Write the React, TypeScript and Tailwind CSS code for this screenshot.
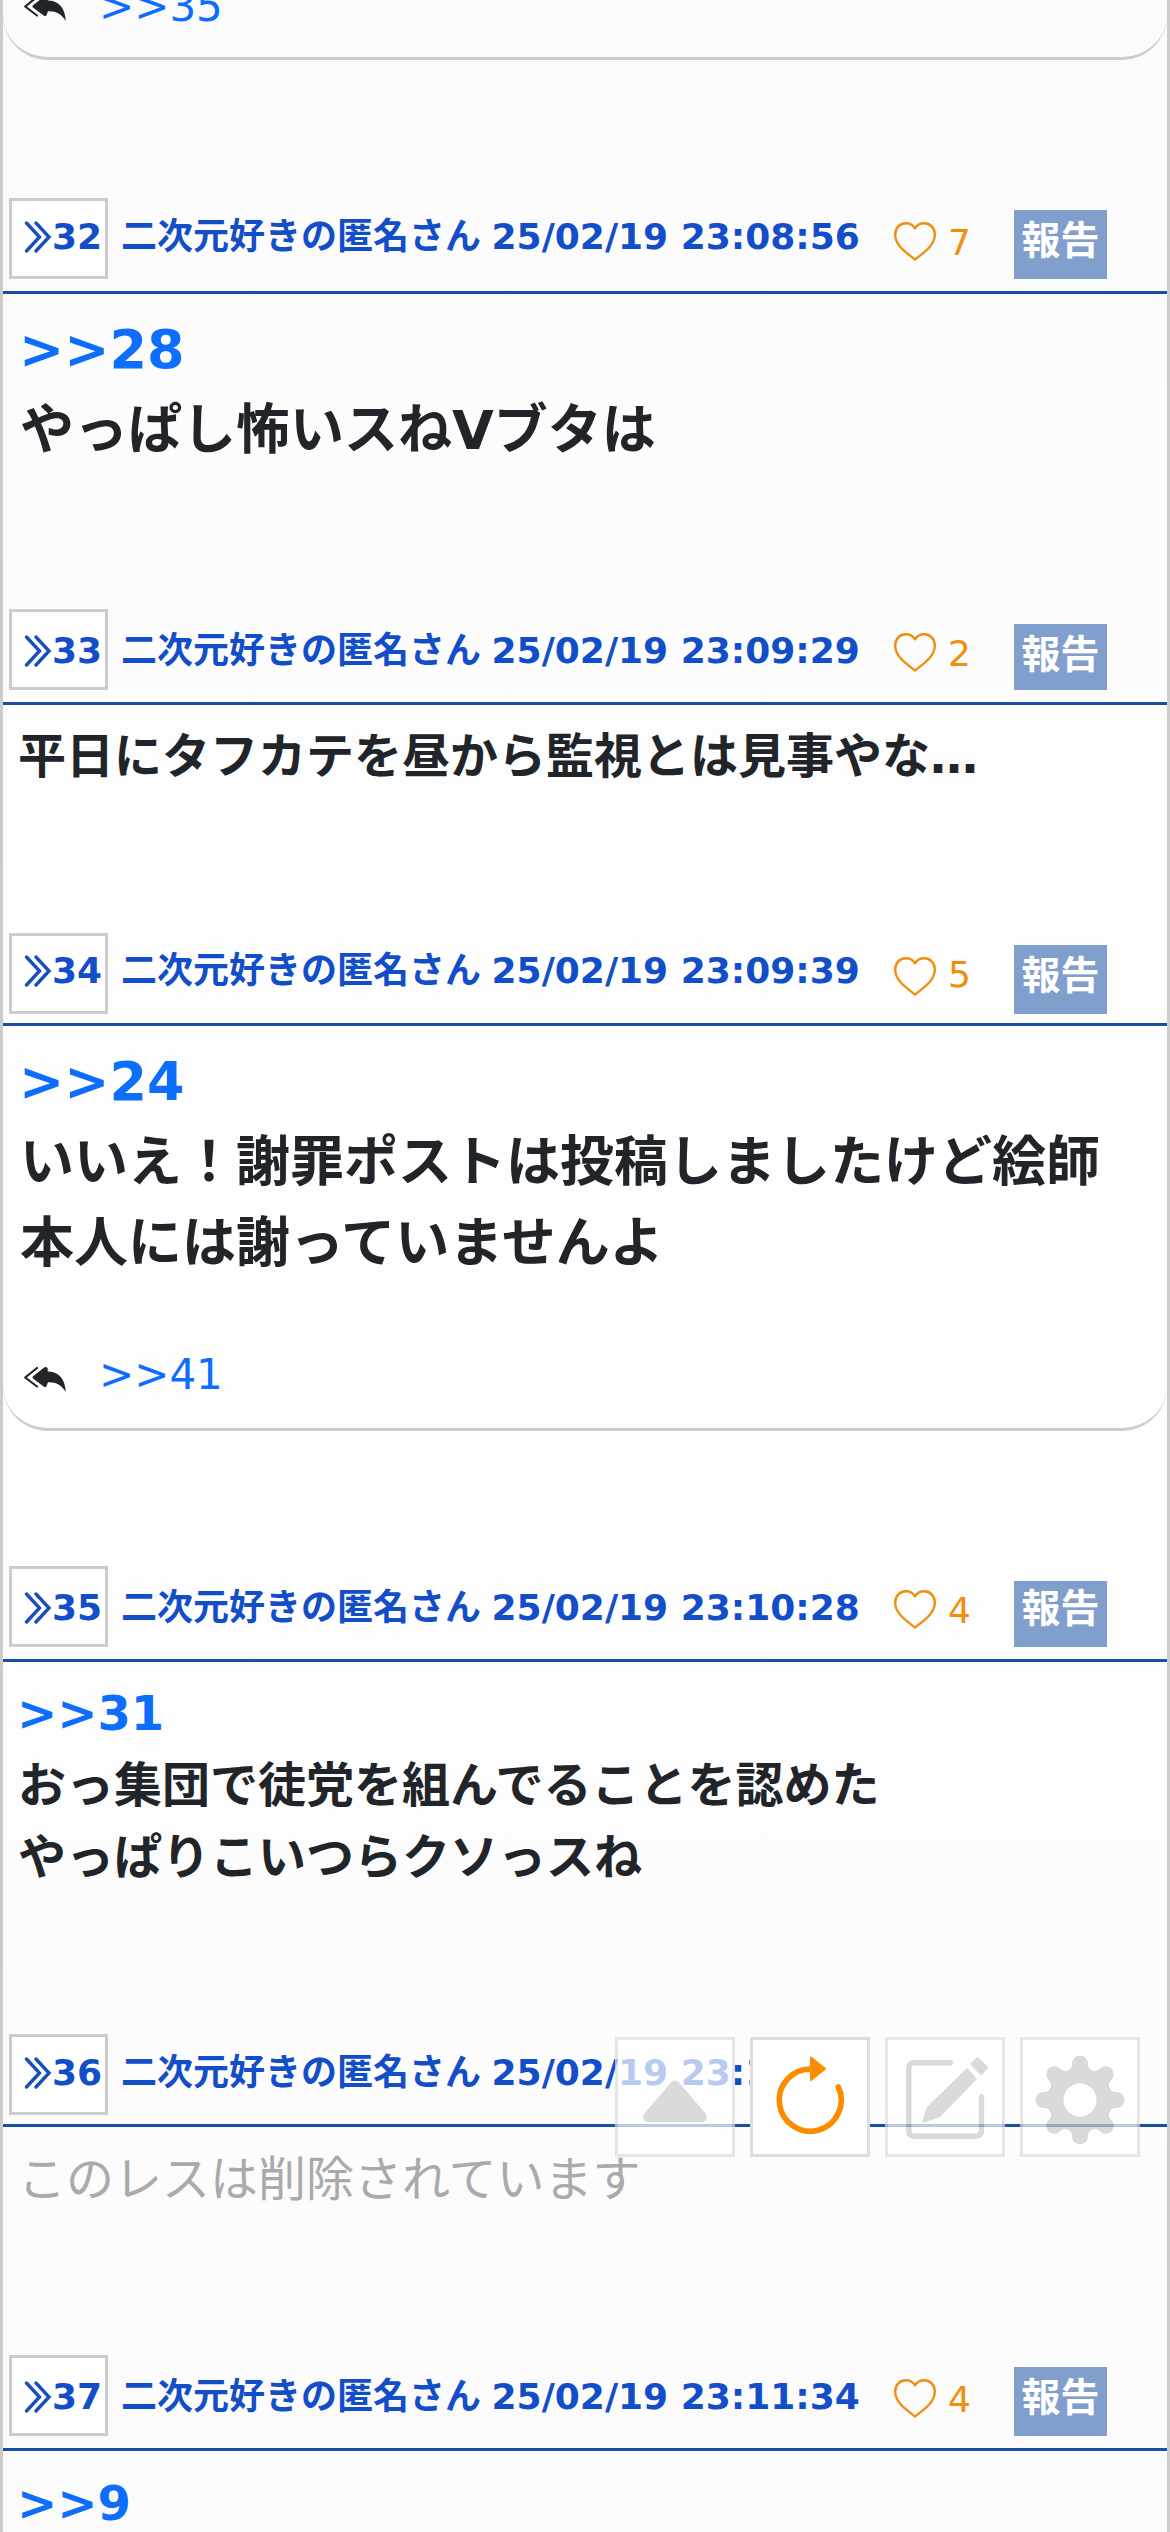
import React from "react";

type Post = {
  id: number;
  date: string;
  likes?: number;
  head: string;
  titlePad: string;
  countPad?: string;
  badge?: string;
  body: string;
  anchor?: string;
  lines: string[];
  reply?: string;
};

const posts: Post[] = [
  {
    id: 32,
    date: "25/02/19 23:08:56",
    likes: 7,
    head: "mt-[138px] h-[96px]",
    titlePad: "pt-[9px]",
    countPad: "pt-[18px]",
    badge: "mt-[12px] h-[69px] pt-[7px]",
    body: "h-[315px] pt-[15px] pl-[17px] text-[54px] font-bold text-[#212529]",
    anchor: ">>28",
    lines: ["やっぱし怖いスねVブタは"],
  },
  {
    id: 33,
    date: "25/02/19 23:09:29",
    likes: 2,
    head: "h-[96px]",
    titlePad: "pt-[12px]",
    countPad: "pt-[18px]",
    badge: "mt-[15px] h-[66px] pt-[7px]",
    body: "h-[228px] pt-[15px] pl-[15px] text-[48px] font-bold text-[#212529]",
    lines: ["平日にタフカテを昼から監視とは見事やな…"],
  },
  {
    id: 34,
    date: "25/02/19 23:09:39",
    likes: 5,
    head: "h-[93px]",
    titlePad: "pt-[8px]",
    countPad: "pt-[15px]",
    badge: "mt-[12px] h-[69px] pt-[7px]",
    body: "h-[300px] pt-[15px] pl-[17px] text-[54px] font-bold text-[#212529]",
    anchor: ">>24",
    lines: ["いいえ！謝罪ポストは投稿しましたけど絵師", "本人には謝っていませんよ"],
    reply: ">>41",
  },
  {
    id: 35,
    date: "25/02/19 23:10:28",
    likes: 4,
    head: "mt-[135px] h-[96px]",
    titlePad: "pt-[12px]",
    countPad: "pt-[18px]",
    badge: "mt-[15px] h-[66px] pt-[4px]",
    body: "h-[372px] pt-[15px] pl-[15px] text-[48px] font-bold text-[#212529]",
    anchor: ">>31",
    lines: ["おっ集団で徒党を組んでることを認めた", "やっぱりこいつらクソっスね"],
  },
  {
    id: 36,
    date: "25/02/19 23:10:51",
    head: "h-[93px]",
    titlePad: "pt-[9px]",
    body: "h-[228px] pt-[16px] pl-[15px] text-[48px] text-[#aaaaaa]",
    lines: ["このレスは削除されています"],
  },
  {
    id: 37,
    date: "25/02/19 23:11:34",
    likes: 4,
    head: "h-[96px]",
    titlePad: "pt-[12px]",
    countPad: "pt-[18px]",
    badge: "mt-[12px] h-[69px] pt-[7px]",
    body: "h-[81px] pt-[16px] pl-[15px] text-[48px] font-bold text-[#212529]",
    anchor: ">>9",
    lines: [],
  },
];

type ReplyRowProps = { anchor: string; className: string; iconClass: string };

const ReplyRow = ({ anchor, className, iconClass }: ReplyRowProps) => (
  <div className={`flex items-start rounded-b-[45px] border-b-[3px] border-[#cccccc] pl-[21px] ${className}`}>
    <svg className={`h-[27px] w-[42px] ${iconClass}`} viewBox="0 0 42 27" fill="none">
      <path d="M13 2 1.2 11.5 13 20.500" stroke="#212529" strokeWidth="2.2" strokeLinecap="round" strokeLinejoin="round" />
      <path
        d="M9 10.300 20.500 1.300Q23 .3 23.700 2.500V5.600C34 5.600 41 12 41.800 26 37 18.500 32 16 24 16.300L22.800 19.500Q22 22 20 20.800L9 12.400Q7.800 11.300 9 10.300Z"
        fill="#212529"
      />
    </svg>
    <a className="ml-[33px] text-[42px] leading-[63px] text-[#0d6efd]">{anchor}</a>
  </div>
);

const PostHeader = ({ post }: { post: Post }) => (
  <div className={`flex items-start border-b-[3px] border-[#1a4fa8] pl-[6px] text-[36px] leading-[54px] ${post.head}`}>
    <div
      className={`flex h-[81px] w-[99px] shrink-0 items-start border-[3px] border-[#cccccc] bg-white pl-[12px] font-bold text-[#124ec8] ${post.titlePad}`}
    >
      <svg className="mt-[11px] h-[32px] w-[28px] shrink-0" viewBox="0 0 28 32" fill="none" stroke="#1a4fb8" strokeWidth="3.400" strokeLinecap="round">
        <path d="M2.500 2 15.500 16 2.500 30M12 2 25 16 12 30" />
      </svg>
      <span>{post.id}</span>
    </div>
    <div className={`ml-[13px] w-[773px] shrink-0 whitespace-nowrap font-bold text-[#124ec8] ${post.titlePad}`}>
      <div className="mt-[3px]">
        二次元好きの匿名さん <span className="-ml-[2px]">{post.date}</span>
      </div>
    </div>
    {post.likes !== undefined && (
      <>
        <svg className="mt-[24px] h-[39px] w-[42px] shrink-0" viewBox="0 0 42 39" fill="none" stroke="#ee8f10" strokeWidth="2.400" strokeLinejoin="round">
          <path d="M21 37.500C12 30.500 1.200 23.500 1.200 12.500 1.200 5.500 6 1.300 12 1.300 16 1.300 19 3 21 6.300 23 3 26 1.300 30 1.300 36 1.300 40.800 5.500 40.800 12.500 40.800 23.500 30 30.500 21 37.500Z" />
        </svg>
        <span className={`ml-[12px] w-[66px] shrink-0 text-[#ee8f10] ${post.countPad}`}>{post.likes}</span>
        <span className={`w-[93px] shrink-0 bg-[#819fcd] text-center text-[39px] font-bold leading-[48px] text-white ${post.badge}`}>
          報告
        </span>
      </>
    )}
  </div>
);

// eight round teeth joined by small concave arcs
const gearPath = () => {
  const point = (deg: number) => {
    const a = (deg * Math.PI) / 180;
    return `${(57 + 37.3 * Math.cos(a)).toFixed(2)} ${(60 + 37.3 * Math.sin(a)).toFixed(2)}`;
  };
  let d = `M${point(-12.4)}`;
  for (let i = 0; i < 8; i++) {
    d += `A8 8 0 1 1 ${point(i * 45 + 12.4)}A6.9 6.9 0 0 0 ${point(i * 45 + 32.6)}`;
  }
  return d + "Z";
};

const boxClass = "flex h-[120px] w-[120px] items-center justify-center border-[3px] border-[#dddddd] bg-white";

const FloatingMenu = () => (
  <div className="fixed right-[30px] top-[2037px] flex gap-[15px]">
    <button className={`${boxClass} opacity-70`}>
      <svg width="114" height="114" viewBox="0 0 114 114">
        <path d="M57 45.500 30 77H84Z" fill="#cccccc" stroke="#cccccc" strokeWidth="10" strokeLinejoin="round" />
      </svg>
    </button>
    <button className={boxClass}>
      <svg width="114" height="114" viewBox="0 0 114 114" fill="none">
        <path d="M58 29.200A31 31 0 1 0 85.300 47" stroke="#fb8c00" strokeWidth="5.700" strokeLinecap="round" />
        <path d="M58 17.500 72 28.700 58 40Z" fill="#fb8c00" stroke="#fb8c00" strokeWidth="2" strokeLinejoin="round" />
      </svg>
    </button>
    <button className={`${boxClass} opacity-70`}>
      <svg width="114" height="114" viewBox="0 0 114 114" fill="none">
        <path d="M62.600 22.700H26.500Q20.800 22.700 20.800 28.500V90.500Q20.800 96.200 26.500 96.200H87.500Q93.500 96.200 93.500 90.500V56.700" stroke="#cccccc" strokeWidth="5.400" strokeLinecap="round" />
        <path d="M79 28 89 39 52 77 35.500 82.700Q34.200 82.500 34.500 81.500L38.700 67.300Z" fill="#cccccc" />
        <path d="M83.500 24 89.500 18.200 99.200 27.500 93 34.200Z" fill="#cccccc" stroke="#cccccc" strokeWidth="2" strokeLinejoin="round" />
      </svg>
    </button>
    <button className={`${boxClass} opacity-70`}>
      <svg width="114" height="114" viewBox="0 0 114 114">
        <path d={gearPath()} fill="#cccccc" />
        <circle cx="57" cy="60" r="16.500" fill="white" />
      </svg>
    </button>
  </div>
);

const App: React.FC = () => {
  return (
    <div className="h-[2532px] w-[1170px] overflow-hidden border-x-[3px] border-[#cccccc] bg-linear-to-b from-[#fbfbfb] via-[#fefefe] to-[#fbfbfb] font-['DejaVu_Sans','Noto_Sans_CJK_JP',sans-serif]">
      <ReplyRow anchor=">>35" className="-mt-[25px] h-[85px]" iconClass="mt-[20px]" />
      {posts.map((post) => (
        <div key={post.id}>
          <PostHeader post={post} />
          <div className={`leading-normal ${post.body}`}>
            {post.anchor && <a className="-ml-px block text-[#0d6efd]">{post.anchor}</a>}
            {post.lines.map((line) => (
              <p key={line} className="whitespace-nowrap">{line}</p>
            ))}
          </div>
          {post.reply && <ReplyRow anchor={post.reply} className="h-[105px] pt-[17px]" iconClass="mt-[23px]" />}
        </div>
      ))}
      <FloatingMenu />
    </div>
  );
};

export default App;
